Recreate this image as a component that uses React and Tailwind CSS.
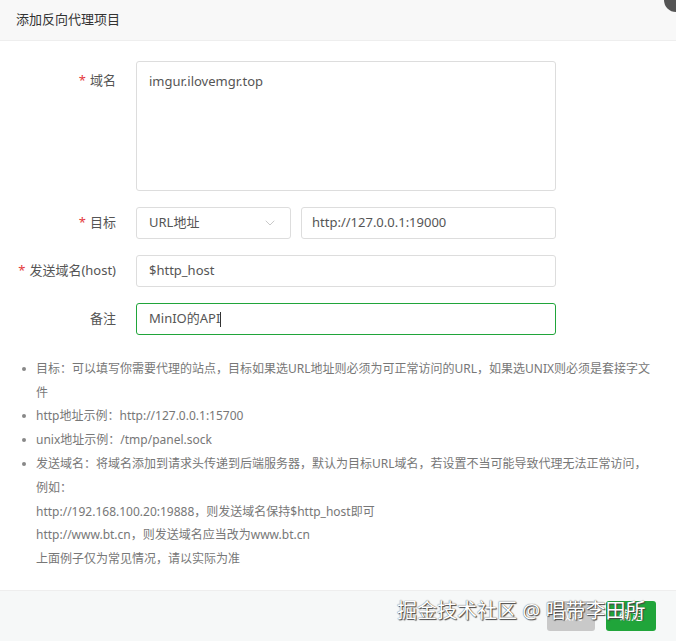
import { ChevronDown } from 'lucide-react'

const font = { fontFamily: '"Noto Sans", "Noto Sans CJK SC", sans-serif' }

const notes = [
    { bullet: true, text: '目标：可以填写你需要代理的站点，目标如果选URL地址则必须为可正常访问的URL，如果选UNIX则必须是套接字文' },
    { bullet: false, text: '件' },
    { bullet: true, text: 'http地址示例：http://127.0.0.1:15700' },
    { bullet: true, text: 'unix地址示例：/tmp/panel.sock' },
    { bullet: true, text: '发送域名：将域名添加到请求头传递到后端服务器，默认为目标URL域名，若设置不当可能导致代理无法正常访问，' },
    { bullet: false, text: '例如：' },
    { bullet: false, text: 'http://192.168.100.20:19888，则发送域名保持$http_host即可' },
    { bullet: false, text: 'http://www.bt.cn，则发送域名应当改为www.bt.cn' },
    { bullet: false, text: '上面例子仅为常见情况，请以实际为准' },
]

function Label({ required, children }) {
    return (
        <div className="w-[116px] shrink-0 text-right text-[13px] text-[#555]">
            {required && <span className="text-[#e4393c] mr-1">*</span>}
            {children}
        </div>
    )
}

export default function App() {
    return (
        <div className="relative w-[676px] h-[641px] bg-white overflow-hidden flex flex-col" style={font}>
            <div className="h-[41px] shrink-0 bg-[#f8f8f8] border-b border-[#eee] flex items-center pl-4 text-[13px] text-[#333]">
                添加反向代理项目
            </div>
            <div className="absolute -top-[12px] -right-[12px] w-[24px] h-[24px] rounded-full bg-[#555]" />

            <div className="flex flex-col pt-[20px] gap-[16px]">
                <div className="flex items-start">
                    <div className="pt-[10px]"><Label required>域名</Label></div>
                    <div className="ml-[20px] w-[420px] h-[130px] border border-[#ddd] rounded-[3px] px-[12px] py-[10px] text-[13px] text-[#555]">
                        imgur.ilovemgr.top
                    </div>
                </div>

                <div className="flex items-center h-[32px]">
                    <Label required>目标</Label>
                    <div className="ml-[20px] w-[155px] h-[32px] border border-[#ddd] rounded-[3px] flex items-center justify-between px-[12px] text-[13px] text-[#555]">
                        <span>URL地址</span>
                        <ChevronDown className="w-4 h-4 text-[#bbb]" strokeWidth={1.2} />
                    </div>
                    <div className="ml-[10px] w-[255px] h-[32px] border border-[#ddd] rounded-[3px] flex items-center px-[10px] text-[13px] text-[#555]">
                        http://127.0.0.1:19000
                    </div>
                </div>

                <div className="flex items-center h-[32px]">
                    <Label required>发送域名(host)</Label>
                    <div className="ml-[20px] w-[420px] h-[32px] border border-[#ddd] rounded-[3px] flex items-center px-[12px] text-[13px] text-[#555]">
                        $http_host
                    </div>
                </div>

                <div className="flex items-center h-[32px]">
                    <Label>备注</Label>
                    <div className="ml-[20px] w-[420px] h-[32px] border border-[#20a53a] rounded-[3px] flex items-center px-[12px] text-[13px] text-[#555]">
                        MinIO的API<span className="w-px h-[15px] bg-[#333]" />
                    </div>
                </div>
            </div>

            <ul className="mt-[22px] pl-[22px] pr-2 flex flex-col text-[12px] text-[#777]">
                {notes.map((n, i) => (
                    <li key={i} className="flex items-center h-[23.8px] whitespace-nowrap">
                        <span className="w-[14px] shrink-0">{n.bullet && <span className="block w-[4px] h-[4px] rounded-full bg-[#888]" />}</span>
                        {n.text}
                    </li>
                ))}
            </ul>

            <div className="mt-auto h-[51px] shrink-0 bg-[#f6f8f8] border-t border-[#eee] flex items-center justify-end gap-[11px] pr-[20px]">
                <button className="w-[48px] h-[30px] rounded-[3px] bg-[#c9c9c9] text-white text-[12px]">取消</button>
                <button className="w-[50px] h-[30px] rounded-[3px] bg-[#20a53a] text-white text-[12px]">确定</button>
            </div>
            <div
                className="absolute left-[397px] top-[596px] text-[20px] text-white whitespace-nowrap"
                style={{ textShadow: '0 0 1px #333, 1px 1px 1px #444' }}
            >
                掘金技术社区 @ 唱带李田所
            </div>
        </div>
    )
}
